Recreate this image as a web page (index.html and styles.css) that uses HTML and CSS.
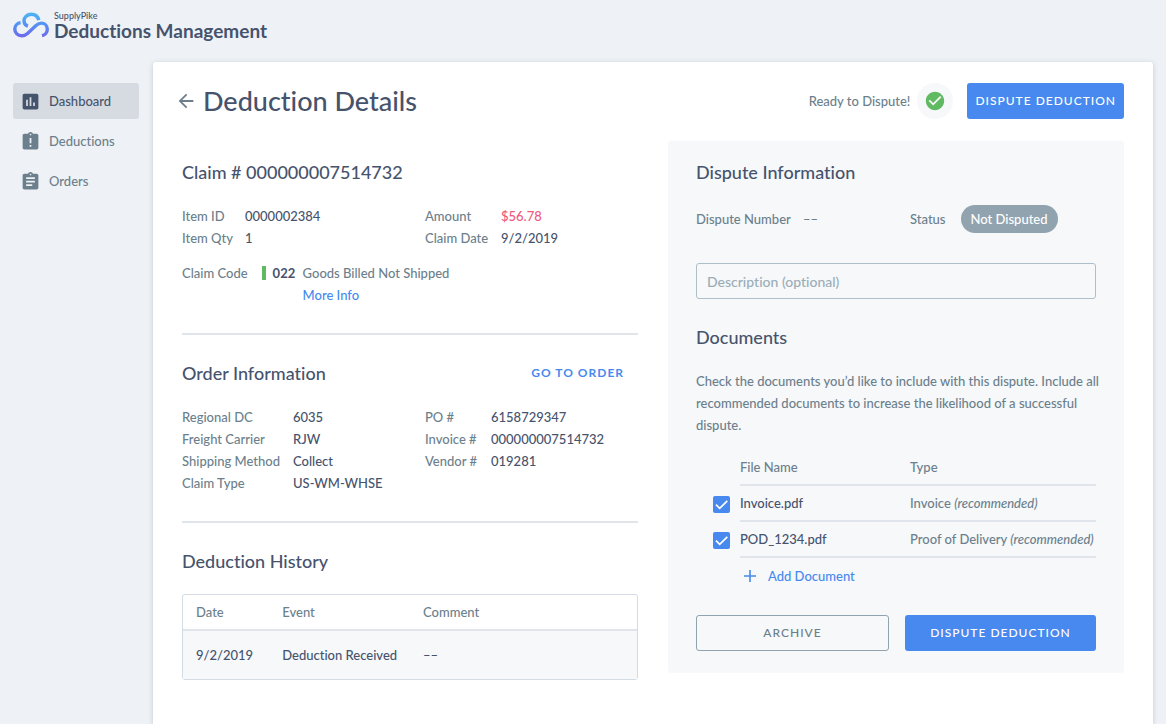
FILE: index.html
```html
<!DOCTYPE html>
<html lang="en">
<head>
    <meta charset="UTF-8">
    <meta name="viewport" content="width=device-width, initial-scale=1.0">
    <title>Deductions Management</title>
    <link rel="stylesheet" href="styles.css">
</head>
<body>

    <!-- Top Bar -->
    <header class="topbar">
        <svg class="logo" viewBox="0 0 36 26" aria-hidden="true">
            <defs>
                <linearGradient id="logo-fill" x1="0" y1="0" x2="0" y2="26" gradientUnits="userSpaceOnUse">
                    <stop offset="0" stop-color="#4cb8f5"/>
                    <stop offset="0.5" stop-color="#5590f3"/>
                    <stop offset="1" stop-color="#7065ea"/>
                </linearGradient>
            </defs>
            <g fill="none" stroke="url(#logo-fill)" stroke-width="3.4">
                <path d="M25.8 8.200C24.9 4.500 21.900 2.200 18.300 2.200c-4.200 0-7.300 3.100-7.300 6.600 0 2.500 1.400 4.600 3.900 5.400"/>
                <path d="M7.600 10.800C4.200 11 1.800 13.800 1.800 17c0 3.900 3 6.800 6.900 6.800 2.300 0 4.100-.9 5.800-2.400L23 13.600c1.600-1.500 3.300-2.500 5.300-2.500 3.400 0 6 2.700 6 6.100 0 3.400-2.300 5.900-5.300 6.400"/>
            </g>
        </svg>
        <div class="brand">
            <span class="brand-company">SupplyPike</span>
            <span class="brand-product">Deductions Management</span>
        </div>
    </header>

    <div class="layout">
        <!-- Sidebar -->
        <nav class="sidebar">
            <a class="nav-item active" href="#">
                <svg viewBox="0 0 24 24" aria-hidden="true"><path d="M19 3H5c-1.100 0-2 .9-2 2v14c0 1.100.9 2 2 2h14c1.100 0 2-.9 2-2V5c0-1.100-.9-2-2-2zM9 17H7v-7h2v7zm4 0h-2V7h2v10zm4 0h-2v-4h2v4z"/></svg>
                Dashboard
            </a>
            <a class="nav-item" href="#">
                <svg viewBox="0 0 24 24" aria-hidden="true"><path d="M19 3h-4.180C14.400 1.840 13.300 1 12 1s-2.400.84-2.820 2H5c-1.100 0-2 .9-2 2v14c0 1.100.9 2 2 2h14c1.100 0 2-.9 2-2V5c0-1.100-.9-2-2-2zm-6 15h-2v-2h2v2zm0-4h-2V8h2v6zm-1-9c-.55 0-1-.45-1-1s.45-1 1-1 1 .45 1 1-.45 1-1 1z"/></svg>
                Deductions
            </a>
            <a class="nav-item" href="#">
                <svg viewBox="0 0 24 24" aria-hidden="true"><path d="M19 3h-4.180C14.400 1.840 13.300 1 12 1s-2.400.84-2.820 2H5c-1.100 0-2 .9-2 2v14c0 1.100.9 2 2 2h14c1.100 0 2-.9 2-2V5c0-1.100-.9-2-2-2zm-7 0c.55 0 1 .45 1 1s-.45 1-1 1-1-.45-1-1 .45-1 1-1zm2 14H7v-2h7v2zm3-4H7v-2h10v2zm0-4H7V7h10v2z"/></svg>
                Orders
            </a>
        </nav>

        <main class="card">
            <!-- Page Header -->
            <div class="page-header">
                <a class="back" href="#" aria-label="Back">
                    <svg viewBox="0 0 24 24" aria-hidden="true"><path d="M20 11H7.830l5.590-5.590L12 4l-8 8 8 8 1.410-1.410L7.830 13H20v-2z"/></svg>
                </a>
                <h1>Deduction Details</h1>
                <span class="ready">Ready to Dispute!</span>
                <span class="ready-badge">
                    <svg viewBox="0 0 24 24" aria-hidden="true"><path d="M12 2C6.480 2 2 6.480 2 12s4.480 10 10 10 10-4.480 10-10S17.520 2 12 2zm-2 15l-5-5 1.410-1.410L10 14.170l7.590-7.590L19 8l-9 9z"/></svg>
                </span>
                <button class="btn btn-primary" type="button">Dispute Deduction</button>
            </div>

            <div class="columns">
                <div class="details">
                    <!-- Claim -->
                    <section class="section">
                        <h2>Claim # 000000007514732</h2>
                        <div class="info">
                            <dl class="claim-item">
                                <dt>Item ID</dt><dd>0000002384</dd>
                                <dt>Item Qty</dt><dd>1</dd>
                            </dl>
                            <dl class="claim-amount">
                                <dt>Amount</dt><dd class="negative">$56.78</dd>
                                <dt>Claim Date</dt><dd>9/2/2019</dd>
                            </dl>
                        </div>
                        <div class="claim-code">
                            <span>Claim Code</span>
                            <span class="code">022</span>
                            <div class="code-text">
                                <span>Goods Billed Not Shipped</span>
                                <a href="#">More Info</a>
                            </div>
                        </div>
                    </section>

                    <!-- Order -->
                    <section class="section">
                        <div class="section-header">
                            <h2>Order Information</h2>
                            <a class="go-to-order" href="#">Go to Order</a>
                        </div>
                        <div class="info">
                            <dl class="order-shipping">
                                <dt>Regional DC</dt><dd>6035</dd>
                                <dt>Freight Carrier</dt><dd>RJW</dd>
                                <dt>Shipping Method</dt><dd>Collect</dd>
                                <dt>Claim Type</dt><dd>US-WM-WHSE</dd>
                            </dl>
                            <dl class="order-numbers">
                                <dt>PO #</dt><dd>6158729347</dd>
                                <dt>Invoice #</dt><dd>000000007514732</dd>
                                <dt>Vendor #</dt><dd>019281</dd>
                            </dl>
                        </div>
                    </section>

                    <!-- History -->
                    <section class="section">
                        <h2>Deduction History</h2>
                        <table class="history">
                            <thead>
                                <tr><th class="col-date">Date</th><th class="col-event">Event</th><th>Comment</th></tr>
                            </thead>
                            <tbody>
                                <tr><td>9/2/2019</td><td>Deduction Received</td><td>––</td></tr>
                            </tbody>
                        </table>
                    </section>
                </div>

                <!-- Dispute Panel -->
                <form class="panel">
                    <h2>Dispute Information</h2>
                    <div class="dispute-row">
                        <span class="dispute-number">Dispute Number</span>
                        <span class="dispute-value">––</span>
                        <span>Status</span>
                        <span class="pill">Not Disputed</span>
                    </div>
                    <input class="description" type="text" placeholder="Description (optional)" aria-label="Description (optional)">

                    <h2>Documents</h2>
                    <p class="help">Check the documents you’d like to include with this dispute. Include all recommended documents to increase the likelihood of a successful dispute.</p>

                    <table class="documents">
                        <thead>
                            <tr><td class="col-check"></td><th class="col-file">File Name</th><th>Type</th></tr>
                        </thead>
                        <tbody>
                            <tr>
                                <td class="col-check"><input class="check" type="checkbox" id="doc-invoice" checked></td>
                                <td class="file"><label for="doc-invoice">Invoice.pdf</label></td>
                                <td>Invoice <em>(recommended)</em></td>
                            </tr>
                            <tr>
                                <td class="col-check"><input class="check" type="checkbox" id="doc-pod" checked></td>
                                <td class="file"><label for="doc-pod">POD_1234.pdf</label></td>
                                <td>Proof of Delivery <em>(recommended)</em></td>
                            </tr>
                        </tbody>
                    </table>
                    <button class="add-document" type="button">
                        <svg viewBox="0 0 14 14" aria-hidden="true"><path d="M7 1v12M1 7h12"/></svg>
                        Add Document
                    </button>

                    <div class="actions">
                        <button class="btn btn-outline" type="button">Archive</button>
                        <button class="btn btn-primary" type="button">Dispute Deduction</button>
                    </div>
                </form>
            </div>
        </main>
    </div>

</body>
</html>
```

FILE: styles.css
```css
* {
    margin: 0;
    padding: 0;
    box-sizing: border-box;
}

body {
    font-family: 'Lato', 'Open Sans', sans-serif;
    font-size: 13px;
    font-weight: 500;
    font-variant-ligatures: none;
    line-height: 22px;
    min-height: 100vh;
    display: flex;
    flex-direction: column;
    background-color: #EEF2F6;
    color: #6C7F8C;
}

a {
    color: #4789EE;
    text-decoration: none;
}

h1, h2 {
    font-weight: 500;
    color: #46536D;
}

h1 {
    font-size: 27px;
    line-height: 34px;
}

h2 {
    font-size: 18px;
    line-height: 24px;
}

/* Top Bar */
.topbar {
    display: flex;
    align-items: center;
    gap: 5px;
    padding: 10px 13px 22px;
}

.logo {
    width: 36px;
    height: 26px;
}

.brand {
    display: flex;
    flex-direction: column;
    color: #46536D;
}

.brand-company {
    font-size: 9px;
    line-height: 11px;
}

.brand-product {
    font-size: 19px;
    font-weight: 700;
    line-height: 19px;
    white-space: nowrap;
}

/* Layout */
.layout {
    flex: 1;
    display: flex;
    padding: 0 13px;
}

/* Sidebar */
.sidebar {
    width: 140px;
    padding: 21px 14px 0 0;
    display: flex;
    flex-direction: column;
    gap: 4px;
}

.nav-item {
    height: 36px;
    display: flex;
    align-items: center;
    gap: 8px;
    padding: 0 7px;
    border-radius: 3px;
    color: #6C7F8C;
}

.nav-item svg {
    width: 21px;
    height: 21px;
    fill: currentColor;
}

.nav-item.active {
    background-color: #D6DBE2;
    color: #46536D;
}

/* Main Card */
.card {
    flex: 1;
    padding-bottom: 28px;
    background-color: #FFFFFF;
    border-radius: 3px 3px 0 0;
    box-shadow: 0 1px 5px rgba(70, 83, 109, 0.25);
}

.page-header {
    display: flex;
    align-items: center;
    padding: 21px 29px 22px 22px;
}

.back {
    display: flex;
    margin-right: 6px;
}

.back svg {
    width: 22px;
    height: 22px;
    fill: #6C7F8C;
}

.ready {
    margin-left: auto;
}

.ready-badge {
    width: 36px;
    height: 36px;
    margin: 0 14px 0 7px;
    display: flex;
    align-items: center;
    justify-content: center;
    border-radius: 50%;
    background-color: #F6F8FA;
}

.ready-badge svg {
    width: 22px;
    height: 22px;
    fill: #60BA62;
}

.columns {
    display: grid;
    grid-template-columns: 1fr 1fr;
    align-items: start;
    gap: 30px;
    padding: 0 29px;
}

/* Buttons */
.btn {
    height: 36px;
    padding: 0 8px;
    border: none;
    border-radius: 3px;
    font: inherit;
    font-size: 12px;
    letter-spacing: 1px;
    text-transform: uppercase;
    cursor: pointer;
}

.btn-primary {
    background-color: #4789EE;
    color: #FFFFFF;
}

.btn-outline {
    background-color: transparent;
    border: 1px solid #91A3AF;
    color: #6C7F8C;
}

/* Details */
.details {
    padding-top: 19px;
}

.section + .section {
    margin-top: 27px;
    padding-top: 26px;
    border-top: 2px solid #DFE5EB;
}

.section-header {
    display: flex;
    justify-content: space-between;
    align-items: center;
    padding-right: 14px;
}

.go-to-order {
    font-size: 12px;
    font-weight: 700;
    letter-spacing: 1px;
    text-transform: uppercase;
}

.info {
    display: grid;
    grid-template-columns: 243fr 213fr;
    align-items: start;
    margin-top: 21px;
}

.info dl {
    display: grid;
}

.claim-item {
    grid-template-columns: 63px auto;
}

.claim-amount {
    grid-template-columns: 76px auto;
}

.order-shipping {
    grid-template-columns: 111px auto;
}

.order-numbers {
    grid-template-columns: 66px auto;
}

dd {
    color: #46536D;
}

dd.negative {
    color: #F0597C;
}

.claim-code {
    display: flex;
    align-items: flex-start;
    margin-top: 13px;
}

.code {
    width: 41px;
    height: 14px;
    margin: 4px 0 0 14px;
    padding-left: 7px;
    border-left: 4px solid #60BA62;
    color: #46536D;
    font-weight: 700;
    line-height: 14px;
}

.code-text {
    display: flex;
    flex-direction: column;
}

/* Tables */
th {
    font-weight: 500;
    text-align: left;
}

table {
    width: 100%;
    table-layout: fixed;
    border-spacing: 0;
}

.history {
    margin-top: 21px;
    border: 1px solid #D3DCE4;
    border-radius: 3px;
}

.history th,
.history td {
    padding-left: 13px;
}

.history th {
    height: 34px;
}

.history td {
    height: 50px;
    background-color: #F6F8FA;
    border-top: 2px solid #DFE5EB;
    color: #46536D;
}

.history .col-date {
    width: 19%;
}

.history .col-event {
    width: 31%;
}

/* Dispute Panel */
.panel {
    padding: 19px 28px 22px;
    background-color: #F6F8FA;
    border-radius: 3px;
}

.dispute-row {
    display: flex;
    align-items: center;
    margin-top: 21px;
}

.dispute-number {
    width: 107px;
}

.dispute-value {
    width: 107px;
}

.pill {
    margin-left: 15px;
    padding: 0 10px;
    border-radius: 14px;
    background-color: #91A3AF;
    color: #FFFFFF;
    line-height: 28px;
}

.description {
    width: 100%;
    height: 36px;
    margin: 30px 0 26px;
    padding: 0 10px;
    border: 1px solid #AFBFCA;
    border-radius: 3px;
    background-color: transparent;
    color: #46536D;
    font: inherit;
    font-size: 14px;
}

.description::placeholder {
    color: #9BADB9;
}

.help {
    margin: 21px -12px 0 0;
}

.documents {
    width: calc(100% - 17px);
    margin: 14px 0 0 17px;
}

.documents th,
.documents td {
    height: 36px;
    border-bottom: 2px solid #DFE5EB;
    white-space: nowrap;
}

.documents .col-check {
    width: 27px;
    border-bottom: none;
}

.documents .col-file {
    width: 170px;
}

.documents .file {
    color: #46536D;
}

.check {
    display: block;
    width: 17px;
    height: 17px;
    appearance: none;
    border: 1px solid #91A3AF;
    border-radius: 2px;
    cursor: pointer;
}

.check:checked {
    border: none;
    background: #4789EE url("data:image/svg+xml,%3Csvg xmlns='http://www.w3.org/2000/svg' viewBox='0 0 17 17'%3E%3Cpath d='M3 8.700l3.700 3.700L14.300 4.800' fill='none' stroke='white' stroke-width='1.700'/%3E%3C/svg%3E");
}

.add-document {
    height: 36px;
    display: flex;
    align-items: center;
    gap: 11px;
    margin-left: 47px;
    border: none;
    background: none;
    color: #4789EE;
    font: inherit;
    cursor: pointer;
}

.add-document svg {
    width: 14px;
    height: 14px;
    fill: none;
    stroke: currentColor;
    stroke-width: 1.6;
}

.actions {
    display: flex;
    gap: 16px;
    margin-top: 21px;
}

.actions .btn {
    flex: 1;
}
```
